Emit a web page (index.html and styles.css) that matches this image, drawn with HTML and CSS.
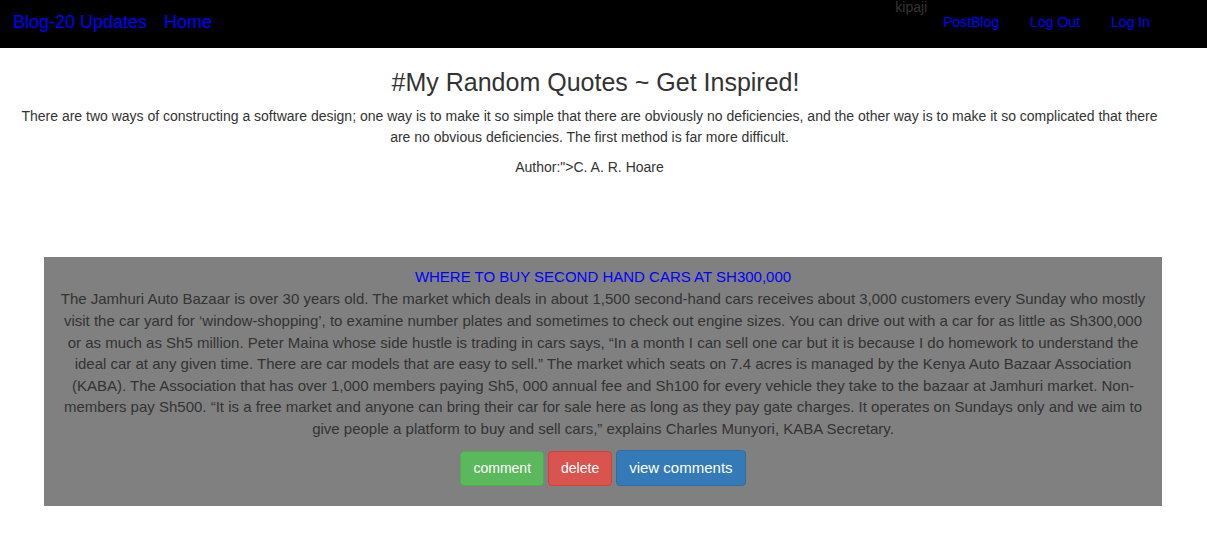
FILE: index.html
```html
<!DOCTYPE html>
<html>
<head>
<meta charset="utf-8">
<title>Blog-20 Updates</title>
<link rel="stylesheet" href="styles.css">
</head>
<body>
<nav class="navbar">
  <div class="nav-left">
    <a class="brand" href="#">Blog-20 Updates</a>
    <a class="brand home" href="#">Home</a>
  </div>
  <div class="nav-right">
    <span class="user">kipaji</span>
    <ul class="nav-links">
      <li><a href="#">PostBlog</a></li>
      <li><a href="#">Log Out</a></li>
      <li><a href="#">Log In</a></li>
    </ul>
  </div>
</nav>
<section class="quote">
  <h3 class="quote-title">#My Random Quotes ~ Get Inspired!</h3>
  <p class="quote-text">There are two ways of constructing a software design; one way is to make it so simple that there are obviously no deficiencies, and the other way is to make it so complicated that there are no obvious deficiencies. The first method is far more difficult.</p>
  <p class="quote-author">Author:"&gt;C. A. R. Hoare</p>
</section>
<section class="posts">
  <article class="post">
    <a class="post-title" href="#">WHERE TO BUY SECOND HAND CARS AT SH300,000</a>
    <p class="post-body">The Jamhuri Auto Bazaar is over 30 years old. The market which deals in about 1,500 second-hand cars receives about 3,000 customers every Sunday who mostly visit the car yard for ‘window-shopping’, to examine number plates and sometimes to check out engine sizes. You can drive out with a car for as little as Sh300,000 or as much as Sh5 million. Peter Maina whose side hustle is trading in cars says, “In a month I can sell one car but it is because I do homework to understand the ideal car at any given time. There are car models that are easy to sell.” The market which seats on 7.4 acres is managed by the Kenya Auto Bazaar Association (KABA). The Association that has over 1,000 members paying Sh5, 000 annual fee and Sh100 for every vehicle they take to the bazaar at Jamhuri market. Non-members pay Sh500. “It is a free market and anyone can bring their car for sale here as long as they pay gate charges. It operates on Sundays only and we aim to give people a platform to buy and sell cars,” explains Charles Munyori, KABA Secretary.</p>
    <div class="actions">
      <button class="btn btn-success">comment</button>
      <button class="btn btn-danger">delete</button>
      <button class="btn btn-primary btn-wide">view comments</button>
    </div>
  </article>
</section>
</body>
</html>
```
FILE: styles.css
```css
* { box-sizing: border-box; }
html, body {
  margin: 0;
  padding: 0;
  background: #fff;
  font-family: "Liberation Sans", Arial, sans-serif;
  font-size: 14px;
  line-height: 1.42857;
  color: #333;
}
a { color: #0000ff; text-decoration: none; }

.navbar {
  background: #000;
  height: 48px;
  display: flex;
  justify-content: space-between;
  padding: 0 0 0 13px;
}
.nav-left {
  display: flex;
  align-items: center;
  gap: 17px;
}
.brand {
  font-size: 18px;
  line-height: 20px;
  padding-bottom: 4px;
}
.nav-right {
  display: flex;
  align-items: flex-start;
  padding-right: 57px;
}
.user {
  color: #333;
  font-size: 14px;
  line-height: 14px;
  margin-top: 0px;
  margin-right: 16px;
}
.nav-links {
  list-style: none;
  margin: 0;
  padding: 0;
  display: flex;
  gap: 31px;
}
.nav-links a {
  display: block;
  padding-top: 12px;
  line-height: 20px;
  font-size: 14px;
}

.quote {
  text-align: center;
  padding: 0 44px 0 16px;
}
.quote-title {
  font-size: 25px;
  font-weight: 500;
  line-height: 1.1;
  margin: 21px 0 9px;
  padding-left: 12px;
}
.quote-text {
  margin: 0 0 10px;
  line-height: 21px;
}
.quote-author {
  margin: 0;
}

.posts {
  padding: 80px 45px 0 44px;
}
.post {
  background: #808080;
  text-align: center;
  padding: 10px 12px 20px;
}
.post-title {
  display: block;
  font-size: 15px;
  line-height: 20px;
  margin-bottom: 1px;
}
.post-body {
  margin: 0 0 11px;
  font-size: 15px;
  line-height: 21.6px;
}
.actions {
  display: flex;
  justify-content: center;
  gap: 4px;
}
.btn {
  font-family: inherit;
  font-size: 14px;
  line-height: 20px;
  color: #fff;
  padding: 5px 12px 6px;
  border: 1px solid transparent;
  border-radius: 4px;
}
.btn-success { background: #5cb85c; border-color: #4cae4c; }
.btn-danger { background: #d9534f; border-color: #d43f3a; }
.btn-primary { background: #337ab7; border-color: #2e6da4; }
.btn-wide { font-size: 15px; padding: 7px 12px; margin-top: -1px; }
```
